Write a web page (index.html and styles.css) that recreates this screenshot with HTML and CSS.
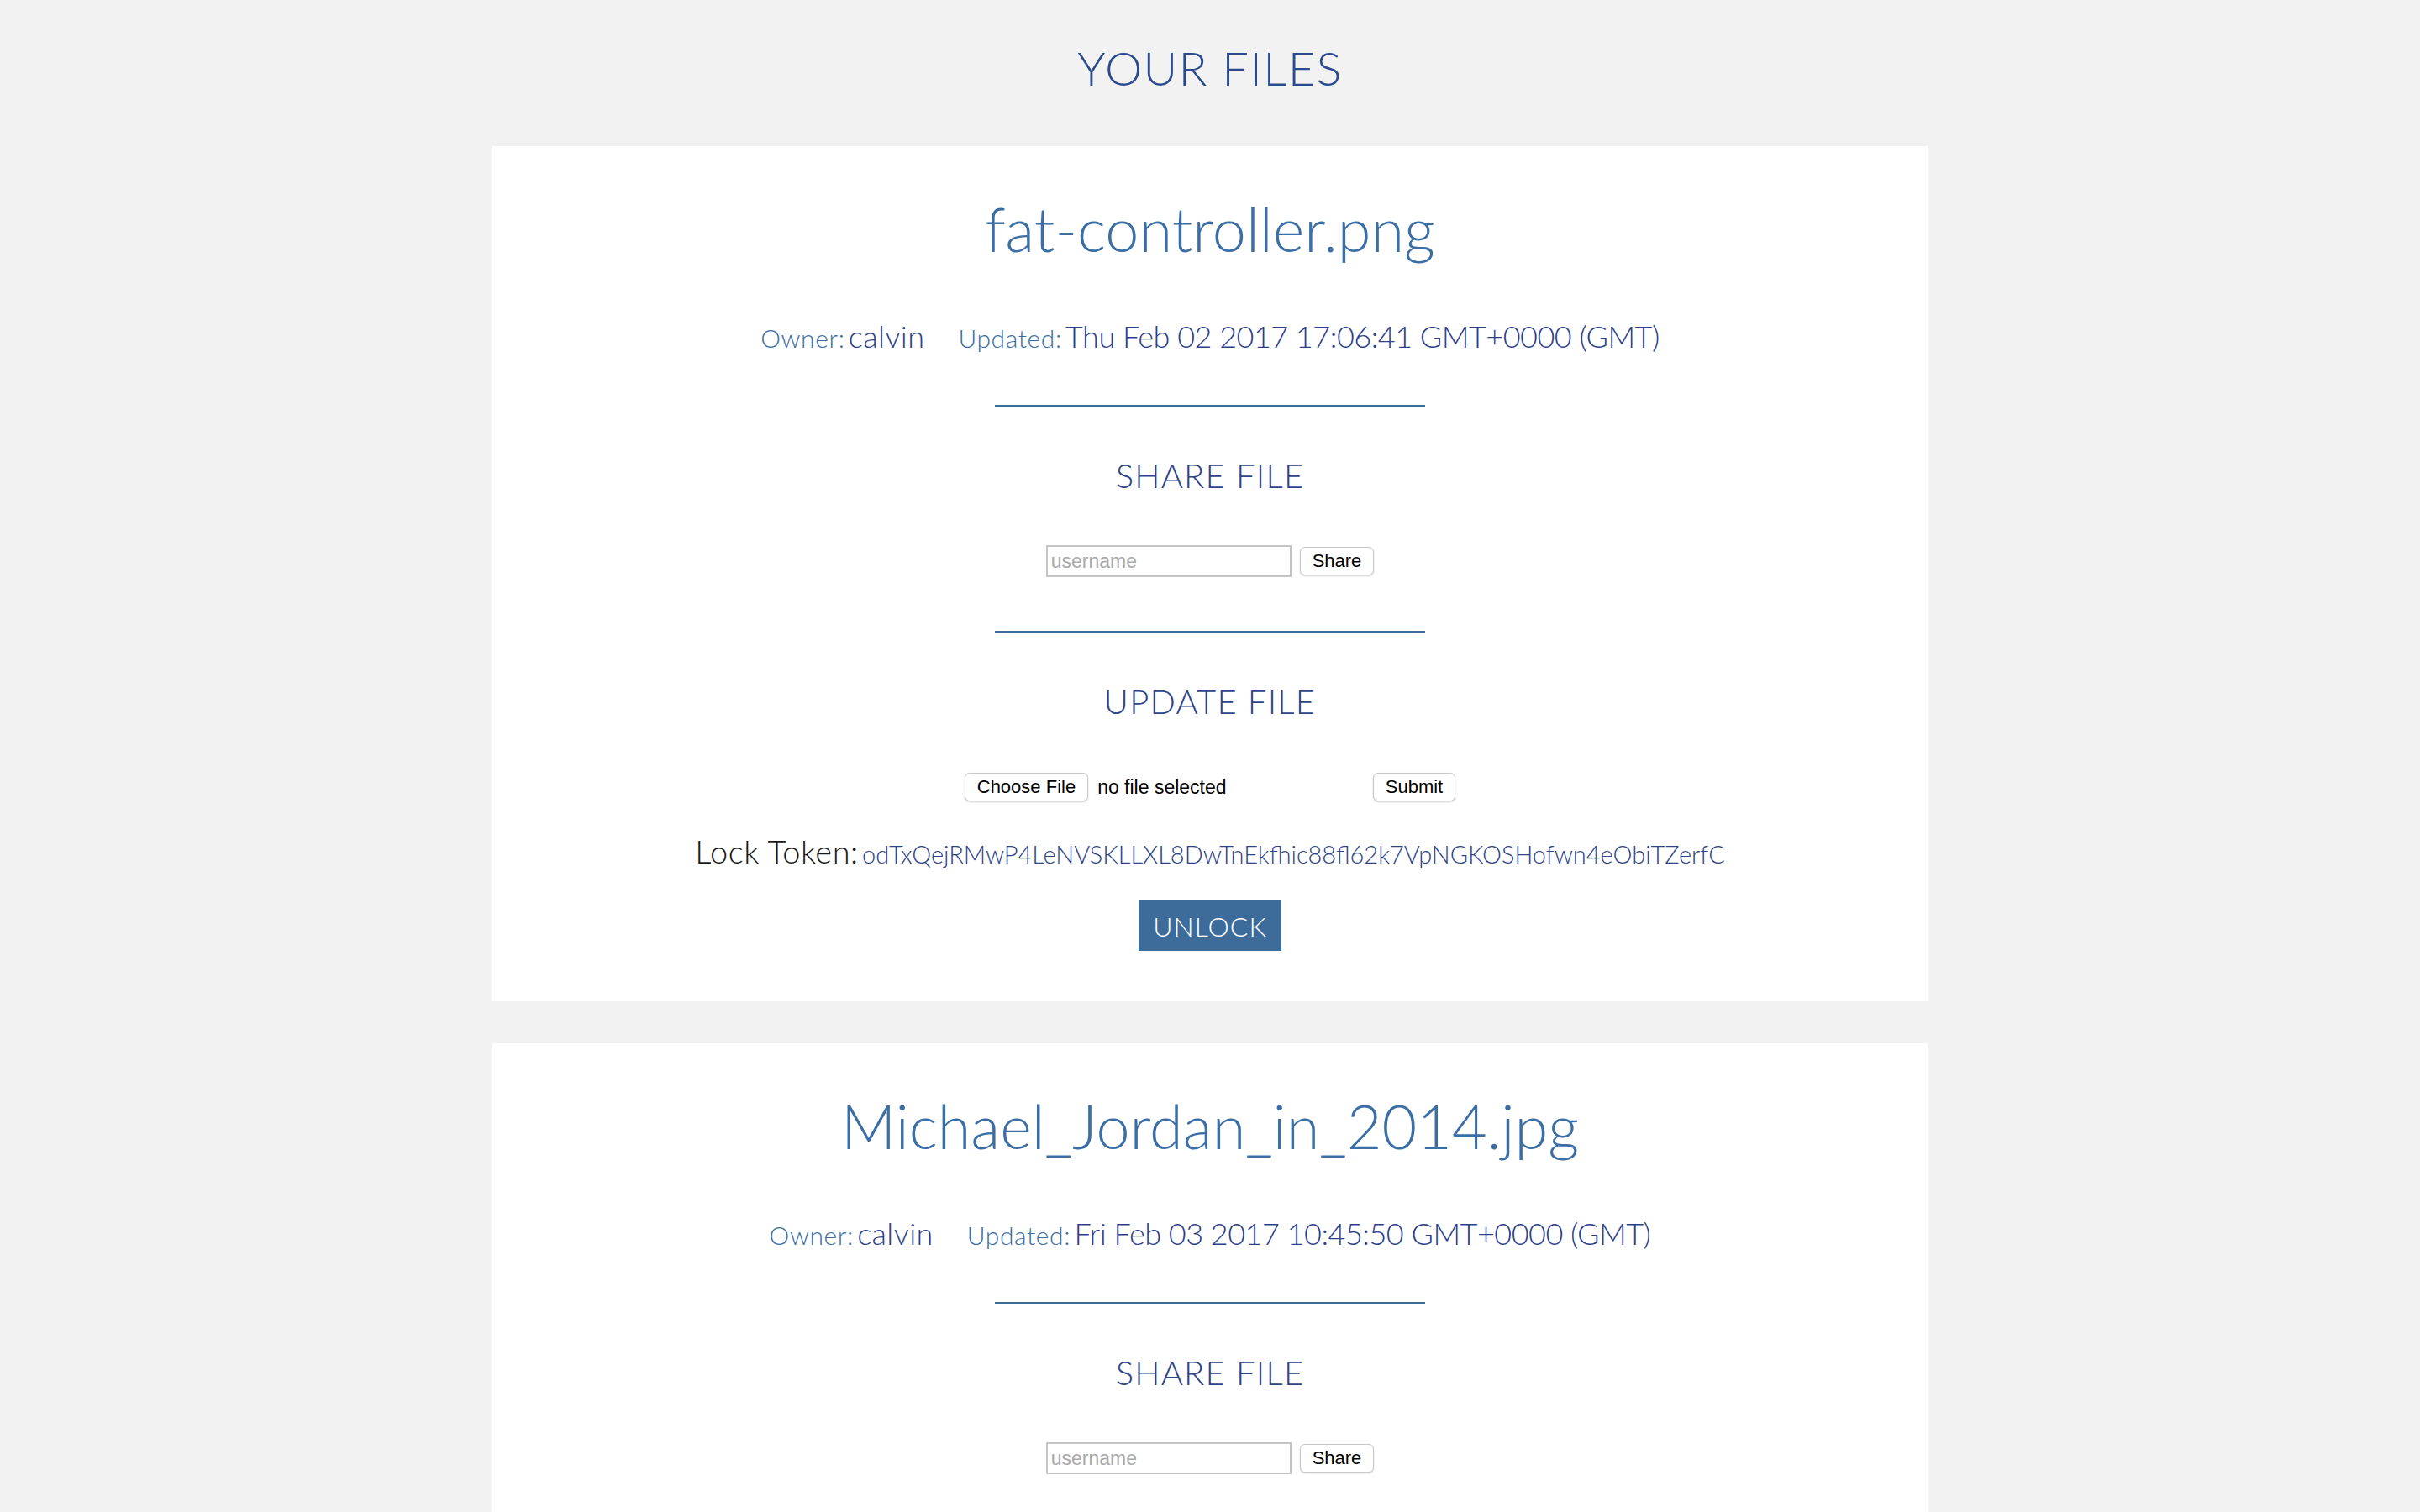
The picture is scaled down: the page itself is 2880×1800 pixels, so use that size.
FILE: index.html
```html
<!DOCTYPE html>
<html lang="en">
<head>
<meta charset="utf-8">
<title>Your Files</title>
<link rel="stylesheet" href="styles.css">
</head>
<body>
<h1 class="page-title">YOUR FILES</h1>

<div class="card">
  <h2 class="file-name">fat-controller.png</h2>
  <div class="meta">
    <span class="meta-item"><span class="meta-label">Owner:</span> <span class="meta-value">calvin</span></span>
    <span class="meta-item"><span class="meta-label">Updated:</span> <span class="meta-value meta-date">Thu Feb 02 2017 17:06:41 GMT+0000 (GMT)</span></span>
  </div>
  <div class="section">
    <div class="rule"></div>
    <h3 class="section-title">SHARE FILE</h3>
    <div class="form-row">
      <input class="text-input" type="text" placeholder="username">
      <button class="native-btn" type="button">Share</button>
    </div>
  </div>
  <div class="section">
    <div class="rule"></div>
    <h3 class="section-title">UPDATE FILE</h3>
    <div class="form-row">
      <span class="file-pick"><span class="native-btn">Choose File</span><span class="file-status">no file selected</span></span>
      <button class="native-btn" type="button">Submit</button>
    </div>
  </div>
  <div class="lock-line"><span class="lock-label">Lock Token:</span> <span class="lock-token">odTxQejRMwP4LeNVSKLLXL8DwTnEkfhic88fl62k7VpNGKOSHofwn4eObiTZerfC</span></div>
  <button class="unlock-btn" type="button">UNLOCK</button>
</div>

<div class="card">
  <h2 class="file-name">Michael_Jordan_in_2014.jpg</h2>
  <div class="meta">
    <span class="meta-item"><span class="meta-label">Owner:</span> <span class="meta-value">calvin</span></span>
    <span class="meta-item"><span class="meta-label">Updated:</span> <span class="meta-value meta-date">Fri Feb 03 2017 10:45:50 GMT+0000 (GMT)</span></span>
  </div>
  <div class="section">
    <div class="rule"></div>
    <h3 class="section-title">SHARE FILE</h3>
    <div class="form-row">
      <input class="text-input" type="text" placeholder="username">
      <button class="native-btn" type="button">Share</button>
    </div>
  </div>
  <div class="section">
    <div class="rule"></div>
    <h3 class="section-title">UPDATE FILE</h3>
    <div class="form-row">
      <span class="file-pick"><span class="native-btn">Choose File</span><span class="file-status">no file selected</span></span>
      <button class="native-btn" type="button">Submit</button>
    </div>
  </div>
</div>
</body>
</html>
```

FILE: styles.css
```css
html, body {
  margin: 0;
  padding: 0;
}

body {
  background: #f2f2f2;
  font-family: "Lato", "Open Sans", sans-serif;
  font-weight: 300;
  padding-bottom: 60px;
}

.page-title {
  margin: 53px 0 65px;
  font-size: 56px;
  line-height: 56px;
  font-weight: 300;
  letter-spacing: 1.3px;
  color: #2b4a8e;
  text-align: center;
}

.card {
  width: 1708px;
  margin: 0 auto 50px;
  background: #ffffff;
  padding: 62px 0 60px;
  display: flex;
  flex-direction: column;
  align-items: center;
  text-align: center;
}

.file-name {
  margin: 0;
  font-size: 72px;
  line-height: 72px;
  font-weight: 300;
  color: #3b6ea5;
}

.meta {
  margin-top: 72px;
  height: 40px;
  display: flex;
  justify-content: center;
  align-items: baseline;
  gap: 40px;
  line-height: 40px;
}

.meta-item {
  height: 40px;
  white-space: nowrap;
}

.meta-label {
  font-size: 30px;
  letter-spacing: 0.6px;
  color: #3b6ea5;
}

.meta-value {
  font-size: 36px;
  letter-spacing: 0.4px;
  color: #2d3f8a;
}

.meta-date {
  letter-spacing: -0.5px;
}

.section {
  display: flex;
  flex-direction: column;
  align-items: center;
  margin-top: 62px;
}

.section + .section {
  margin-top: 64px;
}

.rule {
  width: 512px;
  height: 2px;
  background: #3d6b9a;
}

.section-title {
  margin: 62px 0 0;
  font-size: 40px;
  line-height: 40px;
  font-weight: 300;
  letter-spacing: 1.2px;
  color: #2d4488;
}

.form-row {
  margin-top: 63px;
  height: 38px;
  display: flex;
  align-items: center;
  justify-content: center;
  gap: 10px;
}

.text-input {
  box-sizing: border-box;
  width: 292px;
  height: 38px;
  border: 2px solid #c4c4c4;
  padding: 0 4px;
  font-family: "Liberation Sans", Arial, sans-serif;
  font-size: 23px;
  color: #000;
  background: #fff;
  outline: none;
}

.text-input::placeholder {
  color: #a9a9a9;
}

.native-btn {
  box-sizing: border-box;
  height: 34px;
  padding: 0 14px;
  border: 1px solid #c8c8c8;
  border-radius: 6px;
  background: #ffffff;
  box-shadow: 0 1px 2px rgba(0, 0, 0, 0.18);
  font-family: "Liberation Sans", Arial, sans-serif;
  font-size: 22px;
  line-height: 32px;
  color: #000;
  display: inline-flex;
  align-items: center;
  justify-content: center;
  white-space: nowrap;
}

.file-pick {
  width: 476px;
  display: flex;
  align-items: center;
  gap: 11px;
  text-align: left;
}

.file-status {
  font-family: "Liberation Sans", Arial, sans-serif;
  font-size: 23px;
  color: #000;
}

.lock-line {
  margin-top: 37px;
  height: 40px;
  line-height: 40px;
  white-space: nowrap;
  overflow: visible;
}

.lock-label {
  font-size: 38px;
  letter-spacing: 0.5px;
  color: #1a1a1a;
}

.lock-token {
  font-size: 29px;
  color: #2d4488;
}

.unlock-btn {
  margin-top: 39px;
  width: 170px;
  height: 60px;
  border: none;
  background: #3d6b9a;
  color: #ffffff;
  font-family: "Lato", "Open Sans", sans-serif;
  font-weight: 300;
  font-size: 32px;
  letter-spacing: 1px;
  padding: 0;
}
```
